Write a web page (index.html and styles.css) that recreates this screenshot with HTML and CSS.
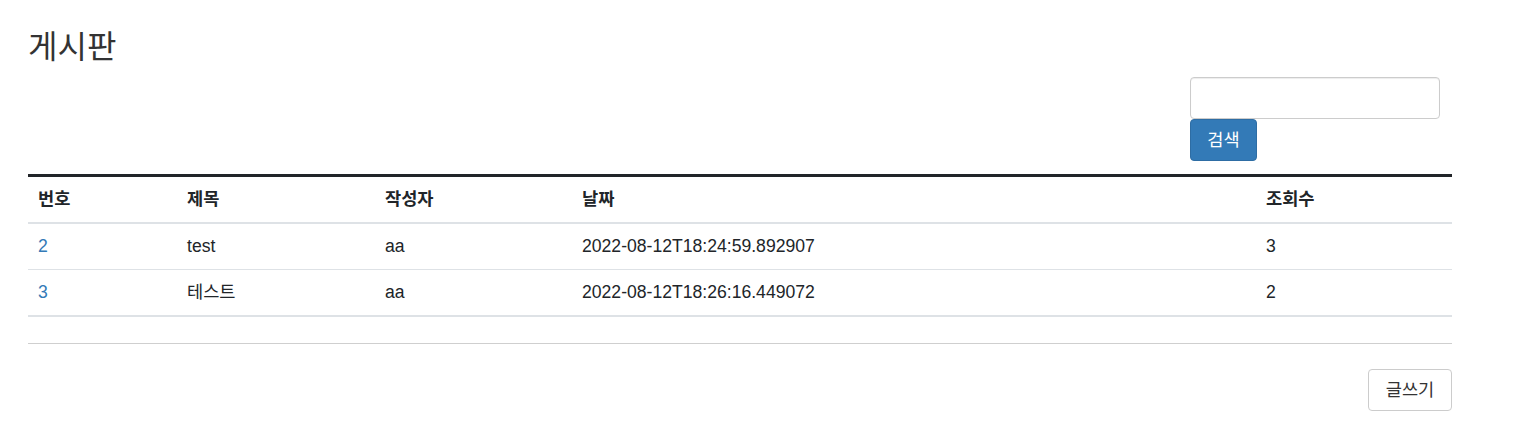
FILE: index.html
```html
<!DOCTYPE html>
<html lang="ko">
<head>
<meta charset="utf-8">
<title>게시판</title>
<link rel="stylesheet" href="styles.css">
</head>
<body>
<div class="container">
  <h2 class="title">게시판</h2>
  <div class="search-row">
    <form class="search-form">
      <input class="search-input" type="text">
      <button class="btn btn-primary" type="button">검색</button>
    </form>
  </div>
  <table class="board">
    <thead>
      <tr>
        <th class="c-no">번호</th>
        <th class="c-title">제목</th>
        <th class="c-writer">작성자</th>
        <th class="c-date">날짜</th>
        <th class="c-view">조회수</th>
      </tr>
    </thead>
    <tbody>
      <tr>
        <td><a href="#">2</a></td>
        <td>test</td>
        <td>aa</td>
        <td>2022-08-12T18:24:59.892907</td>
        <td>3</td>
      </tr>
      <tr>
        <td><a href="#">3</a></td>
        <td>테스트</td>
        <td>aa</td>
        <td>2022-08-12T18:26:16.449072</td>
        <td>2</td>
      </tr>
    </tbody>
  </table>
  <hr class="divider">
  <div class="actions">
    <button class="btn btn-default" type="button">글쓰기</button>
  </div>
</div>
</body>
</html>
```

FILE: styles.css
```css
* {
  box-sizing: border-box;
}

body {
  margin: 0;
  font-family: "Liberation Sans", Arial, "Noto Sans CJK KR", sans-serif;
  font-size: 17.6px;
  color: #212529;
  background: #fff;
}

.container {
  width: 1424px;
  margin-left: 28px;
}

.title {
  margin: 30px 0 0;
  font-size: 32px;
  font-weight: 400;
  line-height: 34px;
  color: #333;
}

.search-row {
  display: flex;
  justify-content: flex-end;
  padding-right: 12px;
  margin-top: 13px;
}

.search-form {
  width: 250px;
  margin: 0;
}

.search-input {
  display: block;
  width: 250px;
  height: 42px;
  margin: 0;
  padding: 6px 12px;
  border: 1px solid #ccc;
  border-radius: 4px;
  font-size: 17.6px;
  box-shadow: inset 0 1px 1px rgba(0, 0, 0, 0.075);
}

.btn {
  display: inline-block;
  height: 42px;
  margin: 0;
  padding: 0 16px;
  border: 1px solid transparent;
  border-radius: 4px;
  font-family: "Liberation Sans", Arial, "Noto Sans CJK KR", sans-serif;
  font-size: 17.6px;
  line-height: 40px;
  cursor: pointer;
}

.btn-primary {
  width: 67px;
  padding: 0;
  color: #fff;
  background: #337ab7;
  border-color: #2e6da4;
}

.btn-default {
  width: 84px;
  padding: 0;
  color: #333;
  background: #fff;
  border-color: #ccc;
}

.board {
  width: 1424px;
  margin-top: 13px;
  border-collapse: separate;
  border-spacing: 0;
  border-top: 3px solid #212529;
  table-layout: fixed;
}

.board th,
.board td {
  padding: 10px;
  text-align: left;
  vertical-align: middle;
  line-height: 25px;
}

.board th {
  font-weight: 700;
  border-bottom: 2px solid #dee2e6;
}

.board td {
  border-bottom: 1px solid #dee2e6;
  font-weight: 400;
}

.board tbody tr:last-child td {
  border-bottom-width: 2px;
}

.c-no { width: 149px; }
.c-title { width: 198px; }
.c-writer { width: 197px; }
.c-date { width: 684px; }
.c-view { width: 196px; }

.board a {
  color: #337ab7;
  text-decoration: none;
}

.divider {
  margin: 26px 0 0;
  border: 0;
  border-top: 1px solid #cfcfcf;
  height: 0;
}

.actions {
  display: flex;
  justify-content: flex-end;
  margin-top: 25px;
}
```
